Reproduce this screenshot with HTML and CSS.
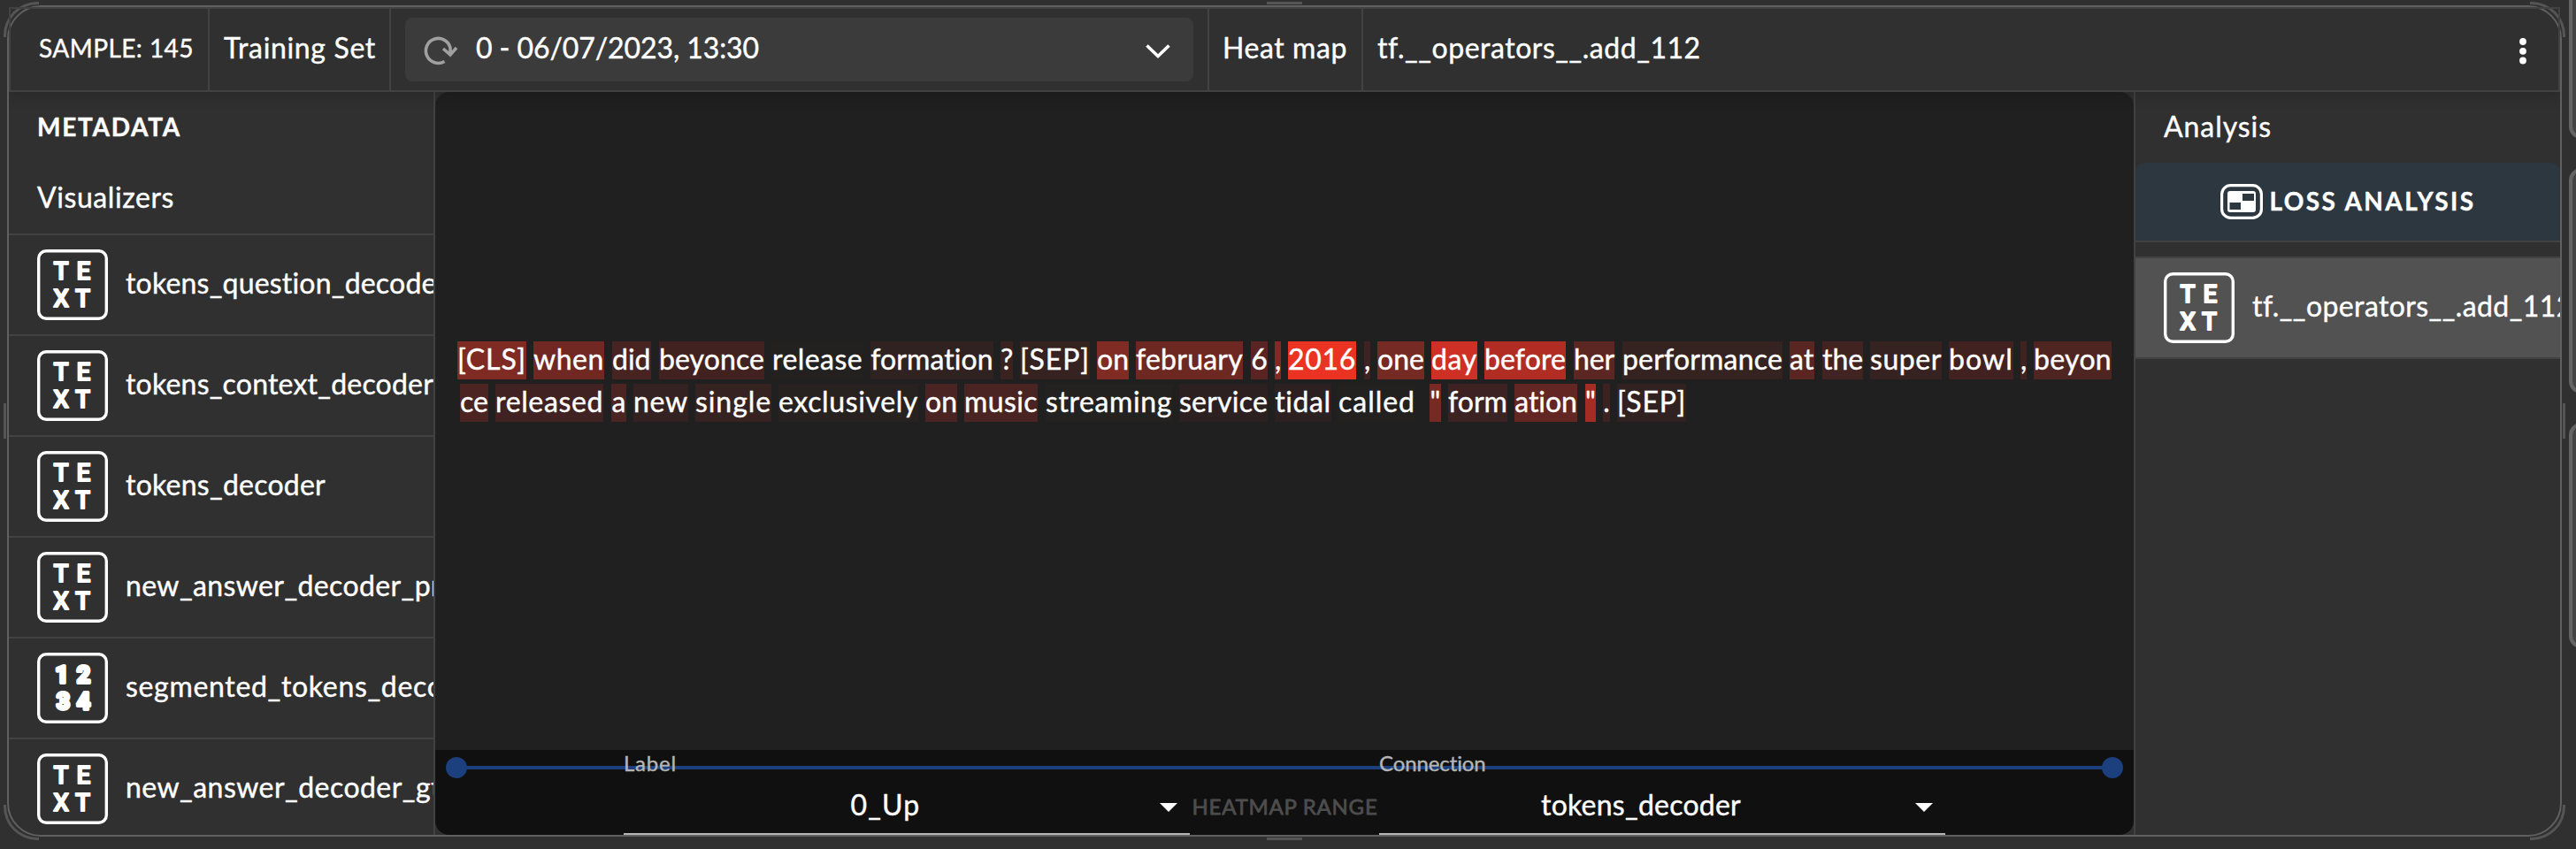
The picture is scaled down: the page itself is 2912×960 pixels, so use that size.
FILE: index.html
```html
<!DOCTYPE html>
<html lang="en">
<head>
<meta charset="utf-8">
<title>Sample 145</title>
<link rel="stylesheet" href="styles.css">
</head>
<body>
<svg class="defs" width="0" height="0">
  <symbol id="text-icon" viewBox="0 0 80 80">
    <rect x="1.7" y="1.7" width="76.6" height="76.6" rx="8.5" fill="none" stroke="#fff" stroke-width="3.4"/>
    <g class="glyphs"><text x="27" y="34">T</text><text x="52.5" y="34">E</text><text x="27" y="65">X</text><text x="51.5" y="65">T</text></g>
  </symbol>
  <symbol id="num-icon" viewBox="0 0 80 80">
    <rect x="1.7" y="1.7" width="76.6" height="76.6" rx="8.5" fill="none" stroke="#fff" stroke-width="3.4"/>
    <g class="glyphs heavy"><text x="28" y="33.5">1</text><text x="52.5" y="33.5">2</text><text x="29.5" y="64">3</text><text x="52.5" y="64">4</text></g>
  </symbol>
</svg>
<div class="stage">
  <div class="card">
    <header class="header">
      <div class="cell sample"><span class="small" data-w="175">SAMPLE: 145</span></div>
      <div class="cell set"><span data-w="172">Training Set</span></div>
      <div class="cell picker">
        <div class="select">
          <svg class="refresh" viewBox="0 0 40 40"><path d="M24.5 32.5A14 14 0 1 1 31 17v7M23 18l8 7 7-8" fill="none" stroke="#a0a0a0" stroke-width="3.6"/></svg>
          <span class="date" data-w="320">0 - 06/07/2023, 13:30</span>
          <svg class="chevron" viewBox="0 0 30 18"><path d="M2.5 2.5l12.500 12 12.500-12" fill="none" stroke="#fff" stroke-width="3.6"/></svg>
        </div>
      </div>
      <div class="cell heat"><span data-w="141">Heat map</span></div>
      <div class="cell tensor"><span data-w="365">tf.__operators__.add_112</span></div>
      <svg class="dots" viewBox="0 0 8 30"><circle cx="4" cy="4" r="3.9"/><circle cx="4" cy="14.800" r="3.9"/><circle cx="4" cy="25.500" r="3.9"/></svg>
    </header>
    <div class="body">
      <aside class="side left">
        <h2 class="title bold"><span data-w="163">METADATA</span></h2>
        <h2 class="title visual"><span data-w="155">Visualizers</span></h2>
        <ul class="list">
          <li class="row"><svg class="tile"><use href="#text-icon"/></svg><span data-w="364">tokens_question_decoder</span></li>
          <li class="row"><svg class="tile"><use href="#text-icon"/></svg><span data-w="348">tokens_context_decoder</span></li>
          <li class="row"><svg class="tile"><use href="#text-icon"/></svg><span data-w="226">tokens_decoder</span></li>
          <li class="row"><svg class="tile"><use href="#text-icon"/></svg><span data-w="392">new_answer_decoder_pred</span></li>
          <li class="row"><svg class="tile"><use href="#num-icon"/></svg><span data-w="408">segmented_tokens_decoder</span></li>
          <li class="row"><svg class="tile"><use href="#text-icon"/></svg><span data-w="357">new_answer_decoder_gt</span></li>
        </ul>
      </aside>
      <main class="main">
        <div class="tokens" id="tokens"></div>
        <div class="controls">
          <div class="slider"><i></i><i></i></div>
          <div class="fields">
            <div class="field"><label data-w="60">Label</label><div class="value"><span data-w="79">0_Up</span></div><svg class="caret" viewBox="0 0 20 10"><path d="M0 0h20L10 10z"/></svg></div>
            <div class="range"><span data-w="210">HEATMAP RANGE</span></div>
            <div class="field"><label data-w="121">Connection</label><div class="value"><span data-w="226">tokens_decoder</span></div><svg class="caret" viewBox="0 0 20 10"><path d="M0 0h20L10 10z"/></svg></div>
          </div>
        </div>
      </main>
      <aside class="side right">
        <h2 class="title"><span data-w="122">Analysis</span></h2>
        <div class="action"><svg class="loss" viewBox="0 0 48 40"><rect x="1.600" y="1.600" width="44.800" height="36.800" rx="10" fill="none" stroke="#fff" stroke-width="3.200"/><rect x="8" y="8" width="32" height="24" rx="3" fill="#fff"/><path d="M25 11h13v8H25zM10.500 21H23v8H10.500z" fill="#2d3740"/></svg><span data-w="233">LOSS ANALYSIS</span></div>
        <div class="row active"><svg class="tile"><use href="#text-icon"/></svg><span data-w="362">tf.__operators__.add_112</span></div>
      </aside>
    </div>
  </div>
  <i class="corner tl"></i><i class="corner tr"></i><i class="corner bl"></i><i class="corner br"></i>
  <i class="grip top"></i><i class="grip bottom"></i><i class="grip west"></i><i class="grip east"></i>
  <i class="peer first"></i><i class="peer second"></i><i class="peer third"></i>
</div>
<script src="app.js"></script>
</body>
</html>
```
FILE: styles.css
```css
* { box-sizing: border-box; }
body { margin: 0; background: #303030; color: #fff; font-family: Lato, "Open Sans", sans-serif; font-size: 32px; line-height: 40px; overflow: hidden; -webkit-text-stroke: 0.4px; }
.defs { display: none; }
.stage { position: relative; height: 960px; padding: 6px 16px 14px 8px; overflow: hidden; }
.card { height: 940px; border: 2px solid #606060; border-radius: 38px; display: flex; flex-direction: column; }
span, label { white-space: nowrap; }

.header { flex: none; height: 96px; border: 2px solid #424242; display: flex; position: relative; z-index: 1; box-shadow: 0 6px 14px rgba(0,0,0,.16); clip-path: inset(0 0 -20px 0); }
.cell { display: flex; align-items: center; border-right: 2px solid #424242; padding-bottom: 4px; }
.small { font-size: 28px; }
.sample { width: 225px; padding-left: 32px; }
.set { width: 205px; padding-left: 16px; }
.picker { width: 925px; padding: 0 0 0 16px; }
.heat { width: 174px; padding-left: 15px; }
.tensor { flex: 1; border: 0; padding-left: 16px; }
.select { width: 891px; height: 72px; border-radius: 8px; background: #3b3b3b; display: flex; align-items: center; padding: 0 25px 0 20px; }
.refresh { width: 40px; height: 40px; margin-top: 2px; }
.date { margin: -4px auto 0 20px; }
.chevron { width: 30px; height: 18px; margin-top: 4px; }
.dots { width: 8px; height: 30px; margin: 33px 36px 0 0; fill: #fff; }

.body { flex: 1; display: flex; min-height: 0; }
.side { width: 482px; flex: none; overflow: hidden; }
.left { border-right: 2px solid #424242; border-bottom-left-radius: 36px; }
.right { border-left: 2px solid #424242; }
.title { margin: 0; height: 80px; padding: 19px 0 0 32px; font-size: 32px; font-weight: 400; line-height: 40px; }
.title.bold { font-size: 28px; font-weight: 700; }
.list { list-style: none; margin: 0; padding: 0; }
.row { height: 114px; border-top: 2px solid #424242; display: flex; align-items: center; padding: 0 0 0 32px; }
.row span { margin: -4px 0 0 20px; }
.tile { width: 80px; height: 80px; flex: none; }
.glyphs { font: 500 28px Roboto, sans-serif; text-anchor: middle; fill: #fff; stroke: #fff; stroke-width: 1.8; stroke-linejoin: round; }
.glyphs.heavy { stroke-width: 4; font-size: 26px; font-weight: 700; }
.action { height: 90px; border-bottom: 2px solid #424242; background: #2d3740; border-radius: 10px 10px 0 0; display: flex; align-items: center; justify-content: center; gap: 8px; font-size: 28px; font-weight: 700; margin-bottom: 16px; }
.action span { margin-top: -3px; }
.loss { width: 48px; height: 40px; }
.active { height: 116px; background: #525252; border-bottom: 2px solid #424242; }

.main { flex: 1; min-width: 0; background: #202020; border-radius: 16px; overflow: hidden; display: flex; flex-direction: column; justify-content: space-between; }
.tokens { padding-top: 282px; }
.line { display: flex; height: 43px; margin-bottom: 5px; }
.token { height: 43px; line-height: 40px; text-align: center; white-space: pre; flex: none; }
.controls { height: 96px; background: #101010; position: relative; }
.slider { position: absolute; left: 24px; right: 24px; top: 18px; height: 4px; background: #1c3f7e; }
.slider i { position: absolute; width: 24px; height: 24px; border-radius: 50%; background: #1c3f7e; top: -10px; left: -12px; }
.slider i + i { left: auto; right: -12px; }
.fields { position: relative; display: flex; justify-content: center; }
.field { width: 640px; height: 96px; border-bottom: 2px solid #b5b5b5; position: relative; }
.field label { display: block; font-size: 24px; line-height: 30px; color: #b5b5b5; }
.value { height: 64px; padding-right: 48px; text-align: center; line-height: 64px; }
.caret { position: absolute; right: 14px; top: 60px; width: 20px; height: 10px; fill: #fff; }
.range { width: 214px; padding-left: 1px; text-align: center; color: #4d4d4d; font-size: 24px; padding-top: 44px; -webkit-text-stroke: 0.8px; }

.corner { position: absolute; width: 40px; height: 40px; border: 0 solid #555; }
.tl { left: 4px; top: 2px; border-width: 3px 0 0 3px; border-top-left-radius: 38px; }
.tr { right: 12px; top: 2px; border-width: 3px 3px 0 0; border-top-right-radius: 38px; }
.bl { left: 4px; top: 910px; border-width: 0 0 3px 3px; border-bottom-left-radius: 38px; }
.br { right: 12px; top: 910px; border-width: 0 3px 3px 0; border-bottom-right-radius: 38px; }
.grip { position: absolute; background: #555; width: 40px; height: 3px; }
.top { left: 1432px; top: 2px; }
.bottom { left: 1432px; top: 947px; }
.west { left: 4px; top: 456px; width: 3px; height: 40px; }
.east { right: 12px; top: 456px; width: 3px; height: 40px; }
.peer { position: absolute; left: 2904px; width: 60px; border: 4px solid #646464; border-radius: 14px; background: #444; }
.first { top: -40px; height: 197px; }
.second { top: 190px; height: 255px; }
.third { top: 478px; height: 255px; }
```
FILE: app.js
```js
// Each token: text, left edge, right edge, heat colour. Edges are measured in page pixels.
const LINES = [
  [['[CLS]',517,595,'#7f2b24'],['when',603,683,'#712722'],['did',692,735.5,'#472322'],['beyonce',745,864,'#422221'],['release',873,975,'#232020'],['formation',984,1123,'#302221'],['?',1131,1145,'#3a2221'],['[SEP]',1153,1232,'#362221'],['on',1240,1276,'#812b25'],['february',1284,1405,'#6e2822'],['6',1414,1433,'#592421'],[',',1441,1448,'#822a26'],['2016',1456,1533,'#eb3324'],[',',1542,1549,'#3f2221'],['one',1557,1610,'#762a24'],['day',1618,1670,'#cf3025'],['before',1678,1770,'#b12d24'],['her',1779,1825,'#5c2622'],['performance',1834,2015,'#352322'],['at',2023,2051,'#5a2622'],['the',2060,2106,'#412322'],['super',2114,2195,'#352221'],['bowl',2203,2276,'#412221'],[',',2284,2291,'#402221'],['beyon',2299,2387,'#4f2522']],
  [['ce',520,552,'#4c2422'],['released',560,682,'#412222'],['a',691,708,'#4c2422'],['new',716,778,'#332221'],['single',786,872,'#352221'],['exclusively',880,1038,'#272220'],['on',1046,1082,'#4a2422'],['music',1090,1173,'#4a2422'],['streaming',1182,1325,'#232221'],['service',1333,1433,'#2c2120'],['tidal',1441,1505,'#2c2120'],['called',1513,1600,'#232120'],['"',1616,1629,'#752a24'],['form',1637,1704,'#3c2222'],['ation',1712,1783,'#642622'],['"',1792,1804,'#a52c24'],['.',1812,1820,'#3c2221'],['[SEP]',1828,1906,'#312121']]
];
const ORIGIN = 492;

// Spread the letters so that the text takes the given width.
function fit(el, width) {
  const range = document.createRange();
  range.selectNodeContents(el);
  const natural = range.getBoundingClientRect().width;
  el.style.letterSpacing = ((width - natural) / el.textContent.length) + 'px';
}

const host = document.getElementById('tokens');
for (const line of LINES) {
  const row = document.createElement('div');
  row.className = 'line';
  host.append(row);
  let x = ORIGIN;
  for (const [text, left, right, colour] of line) {
    const el = document.createElement('div');
    el.className = 'token';
    el.textContent = text;
    el.style.width = (right - left) + 'px';
    el.style.marginLeft = (left - x) + 'px';
    el.style.background = colour;
    row.append(el);
    if (text.length > 1) fit(el, right - left);
    x = right;
  }
}
document.querySelectorAll('[data-w]').forEach(el => fit(el, Number(el.dataset.w)));
```
